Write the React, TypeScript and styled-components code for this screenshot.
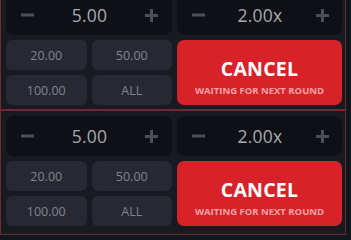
import React from "react";
import styled, { createGlobalStyle } from "styled-components";

const Global = createGlobalStyle`
  html, body { margin: 0; padding: 0; background: #14161d; overflow: hidden; }
  body { font-family: "Open Sans", "DejaVu Sans", sans-serif; }
`;

const List = styled.div`
  display: flex;
  flex-direction: column;
  width: 346px;
  margin-top: -11px;
`;

const Panel = styled.div<{ $last?: boolean }>`
  display: grid;
  grid-template-columns: 166px 165px;
  column-gap: 5px;
  padding: 5px 4px ${(p) => (p.$last ? 8 : 4)}px 5px;
  border: 1px solid #6f2a31;
  background: #181a22;
`;

const Column = styled.div`
  display: flex;
  flex-direction: column;
  gap: 5px;
`;

const Stepper = styled.div`
  height: 40px;
  border-radius: 8px;
  background: #0e1016;
  display: flex;
  align-items: center;
  justify-content: space-between;
  padding: 0 13px 0 14px;
`;

const StepValue = styled.span`
  font-size: 17.5px;
  color: #a6a9b3;
  letter-spacing: 0.2px;
`;

const IconBtn = styled.span`
  display: flex;
  width: 14px;
  height: 14px;
  align-items: center;
  justify-content: center;
`;

const QuickGrid = styled.div`
  display: grid;
  grid-template-columns: 1fr 1fr;
  grid-auto-rows: 30px;
  gap: 5px;
`;

const Quick = styled.div`
  background: #262933;
  border-radius: 6px;
  display: flex;
  align-items: center;
  justify-content: center;
  font-size: 12.5px;
  color: #80848f;
`;

const Cancel = styled.div`
  height: 65px;
  border-radius: 7px;
  background: #d8222a;
  display: flex;
  flex-direction: column;
  align-items: center;
  justify-content: center;
  padding-top: 8px;
  box-sizing: border-box;
`;

const CancelTitle = styled.span`
  font-size: 19.5px;
  font-weight: 700;
  color: #ffffff;
  line-height: 24px;
  letter-spacing: 0.2px;
`;

const CancelSub = styled.span`
  margin-top: 4px;
  font-size: 9.5px;
  font-weight: 700;
  color: #f6a2a3;
  line-height: 12px;
`;

const Minus = () => (
  <IconBtn>
    <svg width="13" height="4" viewBox="0 0 13 4">
      <rect x="0" y="0.5" width="13" height="3" fill="#4b4e58" />
    </svg>
  </IconBtn>
);

const Plus = () => (
  <IconBtn>
    <svg width="13" height="13" viewBox="0 0 13 13">
      <rect x="0" y="5" width="13" height="3" fill="#4b4e58" />
      <rect x="5" y="0" width="3" height="13" fill="#4b4e58" />
    </svg>
  </IconBtn>
);

const BetPanel = ({ last }: { last?: boolean }) => (
  <Panel $last={last}>
    <Column>
      <Stepper>
        <Minus />
        <StepValue>5.00</StepValue>
        <Plus />
      </Stepper>
      <QuickGrid>
        <Quick>20.00</Quick>
        <Quick>50.00</Quick>
        <Quick>100.00</Quick>
        <Quick>ALL</Quick>
      </QuickGrid>
    </Column>
    <Column>
      <Stepper>
        <Minus />
        <StepValue>2.00x</StepValue>
        <Plus />
      </Stepper>
      <Cancel>
        <CancelTitle>CANCEL</CancelTitle>
        <CancelSub>WAITING FOR NEXT ROUND</CancelSub>
      </Cancel>
    </Column>
  </Panel>
);

export default function App() {
  return (
    <>
      <Global />
      <List>
        <BetPanel />
        <BetPanel last />
      </List>
    </>
  );
}
